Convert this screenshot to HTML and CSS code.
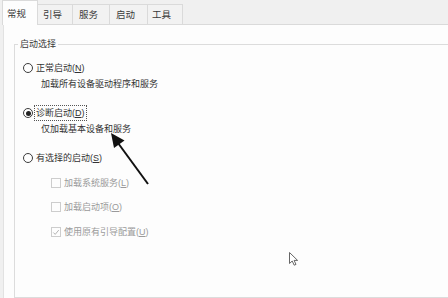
FILE: index.html
```html
<!DOCTYPE html>
<html lang="zh-CN">
<head>
<meta charset="utf-8">
<title>系统配置</title>
<link rel="stylesheet" href="styles.css">
</head>
<body>
<div class="window">
  <div class="tabs">
    <div class="tab active">常规</div>
    <div class="tab w35">引导</div>
    <div class="tab w37">服务</div>
    <div class="tab w38">启动</div>
    <div class="tab w35 last">工具</div>
  </div>
  <div class="panel">
    <fieldset class="group">
      <legend>启动选择</legend>
      <div class="opt first"><span class="radio"></span><span>正常启动(<u>N</u>)</span></div>
      <div class="desc">加载所有设备驱动程序和服务</div>
      <div class="opt gap"><span class="radio checked"></span><span class="focus">诊断启动(<u>D</u>)</span></div>
      <div class="desc">仅加载基本设备和服务</div>
      <div class="opt gap"><span class="radio"></span><span>有选择的启动(<u>S</u>)</span></div>
      <div class="chk c1"><span class="box"></span><span>加载系统服务(<u>L</u>)</span></div>
      <div class="chk c2"><span class="box"></span><span>加载启动项(<u>O</u>)</span></div>
      <div class="chk c1"><span class="box"><svg class="tick" viewBox="0 0 9 9" width="9" height="9"><path d="M1.5 4.5 L3.6 6.6 L7.6 1.8" fill="none" stroke="#a8a8a8" stroke-width="1"/></svg></span><span>使用原有引导配置(<u>U</u>)</span></div>
    </fieldset>
  </div>
  <svg class="arrow" width="448" height="298" viewBox="0 0 448 298">
    <line x1="148" y1="184" x2="118" y2="143" stroke="#111" stroke-width="2"/>
    <polygon points="111,133 124.5,140.5 114,148" fill="#111"/>
  </svg>
  <svg class="cursor" width="12" height="16" viewBox="0 0 12 16">
    <path d="M0.5 0.5 L0.5 11.5 L3.2 9 L5.2 13.2 L7 12.4 L5.1 8.4 L8.6 8.4 Z" fill="#fff" stroke="#555" stroke-width="0.9" stroke-linejoin="round"/>
  </svg>
</div>
</body>
</html>
```

FILE: styles.css
```css
* { box-sizing: border-box; }
html, body { margin: 0; padding: 0; }
body {
  width: 448px;
  height: 298px;
  overflow: hidden;
  background: #f0f0f0;
  font-family: "Liberation Sans", "Noto Sans CJK SC", sans-serif;
  font-size: 9px;
  color: #333;
}
.window {
  position: relative;
  height: 298px;
  display: flex;
  flex-direction: column;
}
.tabs {
  height: 24px;
  display: flex;
  align-items: flex-end;
  padding-left: 2px;
  flex: none;
}
.tab {
  height: 20px;
  line-height: 19px;
  padding-left: 5px;
  font-size: 9.5px;
  color: #3a3a3a;
  background: #f2f2f2;
  border-top: 1px solid #dadada;
  border-right: 1px solid #dadada;
}
.tab.active {
  position: relative;
  z-index: 1;
  width: 36px;
  height: 25px;
  margin-bottom: -1px;
  line-height: 26px;
  padding-left: 4px;
  padding-top: 0;
  background: #fdfdfd;
  border-left: 1px solid #dadada;
}
.w35 { width: 35px; }
.w37 { width: 37px; padding-left: 6px; }
.w38 { width: 38px; padding-left: 6px; }
.last { padding-left: 4px; }
.panel {
  flex: 1;
  margin-left: 3px;
  background: #fdfdfd;
  border-top: 1px solid #dadada;
  border-left: 1px solid #e2e2e2;
  display: flex;
  flex-direction: column;
  overflow: hidden;
}
.group {
  flex: 1;
  margin: 13px -30px 0 10px;
  padding: 0 0 0 8px;
  border: 1px solid #dcdcdc;
  min-width: 0;
}
.group legend {
  margin-left: -5px;
  padding: 0 2px;
  line-height: 12px;
  font-size: 9px;
  color: #3a3a3a;
}
.opt {
  display: flex;
  align-items: center;
  height: 16px;
  line-height: 16px;
  color: #333;
}
.opt.first { margin-top: 10px; }
.opt.gap { margin-top: 13px; }
.radio {
  width: 10px;
  height: 10px;
  border: 1px solid #3c3c3c;
  border-radius: 50%;
  background: #fff;
  margin-right: 3px;
  display: flex;
  align-items: center;
  justify-content: center;
  flex: none;
}
.radio.checked::after {
  content: "";
  width: 5px;
  height: 5px;
  border-radius: 50%;
  background: #222;
}
.focus {
  outline: 1px dotted #555;
  line-height: 14px;
  padding: 0 1px 0 0;
  margin-left: -1px;
  padding-left: 1px;
}
.desc {
  height: 16px;
  line-height: 16px;
  padding-left: 18px;
  color: #333;
}
.chk {
  display: flex;
  align-items: center;
  height: 16px;
  line-height: 16px;
  padding-left: 28px;
  color: #9a9a9a;
}
.chk.c1 { margin-top: 9px; }
.chk.c2 { margin-top: 8px; }
.box {
  width: 10px;
  height: 10px;
  border: 1px solid #cdcdcd;
  background: #fdfdfd;
  margin-right: 3px;
  flex: none;
  display: flex;
  align-items: center;
  justify-content: center;
}
.tick { display: block; }
.arrow {
  position: absolute;
  left: 0;
  top: 0;
  pointer-events: none;
}
.cursor {
  position: absolute;
  left: 289px;
  top: 252px;
}
```
